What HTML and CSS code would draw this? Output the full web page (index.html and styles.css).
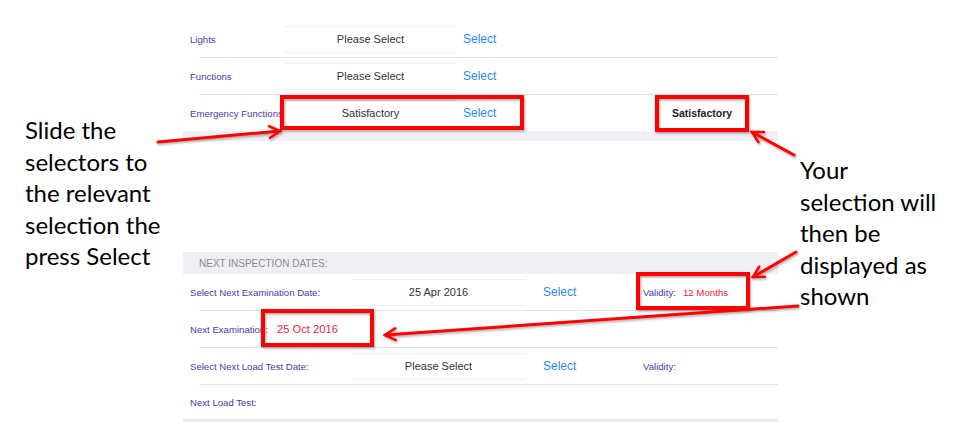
FILE: index.html
```html
<!DOCTYPE html>
<html lang="en">
<head>
<meta charset="utf-8">
<title>Inspection selectors</title>
<link rel="stylesheet" href="styles.css">
</head>
<body>
<div class="page">
  <div class="note note-left">Slide the<br>selectors to<br>the relevant<br>selection the<br>press Select</div>

  <div class="panel">
    <div class="group-top">
      <div class="row row-top sep">
        <span class="label">Lights</span>
        <div class="picker">Please Select</div>
        <span class="select">Select</span>
        <span class="result"></span>
      </div>
      <div class="row row-top sep">
        <span class="label">Functions</span>
        <div class="picker">Please Select</div>
        <span class="select">Select</span>
        <span class="result"></span>
      </div>
      <div class="row row-top last">
        <span class="label">Emergency Functions</span>
        <div class="picker">Satisfactory</div>
        <span class="select">Select</span>
        <span class="result">Satisfactory</span>
      </div>
    </div>
    <div class="band"></div>

    <div class="group-dates">
      <div class="header">NEXT INSPECTION DATES:</div>
      <div class="row row-date sep">
        <span class="label">Select Next Examination Date:</span>
        <div class="picker picker-date">25 Apr 2016</div>
        <span class="select">Select</span>
        <span class="validity">Validity:<span class="value">12 Months</span></span>
      </div>
      <div class="row row-next sep">
        <span class="label">Next Examination:</span>
        <span class="value value-big">25 Oct 2016</span>
      </div>
      <div class="row row-date sep">
        <span class="label">Select Next Load Test Date:</span>
        <div class="picker picker-date">Please Select</div>
        <span class="select">Select</span>
        <span class="validity">Validity:</span>
      </div>
      <div class="row row-next row-end">
        <span class="label">Next Load Test:</span>
      </div>
      <div class="band-thin"></div>
    </div>
  </div>

  <div class="note note-right">Your<br>selection will<br>then be<br>displayed as<br>shown</div>

  <svg class="overlay" width="968" height="432" viewBox="0 0 968 432" aria-hidden="true">
    <defs>
      <marker id="head" viewBox="0 0 12 12" refX="10.5" refY="6" markerWidth="14" markerHeight="14" markerUnits="userSpaceOnUse" orient="auto">
        <path d="M1.5,1 L10.5,6 L1.5,11" fill="none" stroke="#ff0000" stroke-width="2.2" stroke-linecap="round" stroke-linejoin="miter"/>
      </marker>
      <filter id="sh" x="-10%" y="-20%" width="130%" height="150%">
        <feDropShadow dx="1" dy="1.5" stdDeviation="1.2" flood-color="#000" flood-opacity="0.35"/>
      </filter>
    </defs>
    <g fill="none" stroke="#ff0000" stroke-width="4" filter="url(#sh)">
      <rect x="282" y="97" width="240" height="31"/>
      <rect x="657" y="97" width="90" height="33"/>
      <rect x="638" y="274" width="110" height="34"/>
      <rect x="263" y="311" width="109" height="34"/>
    </g>
    <g fill="none" stroke="#ff0000" stroke-width="3" stroke-linecap="round" marker-end="url(#head)" filter="url(#sh)">
      <line x1="158" y1="142" x2="280" y2="131"/>
      <line x1="794" y1="155" x2="752" y2="132"/>
      <line x1="796" y1="252" x2="753" y2="277"/>
      <line x1="798" y1="306" x2="385" y2="335"/>
    </g>
  </svg>
</div>
</body>
</html>
```

FILE: styles.css
```css
* { box-sizing: border-box; }

html, body {
  margin: 0;
  padding: 0;
  background: #ffffff;
}

body {
  width: 968px;
  height: 432px;
  overflow: hidden;
  font-family: "Liberation Sans", Arial, Helvetica, sans-serif;
}

.page {
  position: relative;
  width: 968px;
  height: 432px;
  display: grid;
  grid-template-columns: 183px 595px 1fr;
  align-items: start;
}

/* annotations */
.note {
  font-family: Lato, "Open Sans", sans-serif;
  font-size: 24px;
  line-height: 31.6px;
  color: #000;
  white-space: nowrap;
}
.note-left {
  padding: 114px 0 0 25px;
}
.note-right {
  padding: 154px 0 0 22px;
}

/* panel */
.panel {
  padding-top: 21px;
}

.row {
  display: grid;
  align-items: center;
  padding-left: 7px;
  padding-bottom: 1px;
  height: 37px;
}
.row.sep {
  background: linear-gradient(#e4e4e8, #e4e4e8) no-repeat 16px 100% / calc(100% - 16px) 1px;
}
.row.last { height: 36px; padding-bottom: 0; }

.row-top {
  grid-template-columns: 95px 171px 216px 1fr;
}
.row-top .select { padding-left: 7px; }

.label {
  font-size: 9.6px;
  color: #4a39a8;
  white-space: nowrap;
  overflow: hidden;
}

.picker {
  height: 27px;
  border-top: 1px solid #efeff1;
  border-bottom: 1px solid #efeff1;
  display: flex;
  align-items: center;
  justify-content: center;
  font-size: 11px;
  color: #333;
  padding-bottom: 1px;
}

.select {
  font-size: 12px;
  color: #2a8af6;
}

.result {
  font-size: 10.5px;
  font-weight: bold;
  color: #222;
}

.band {
  height: 10px;
  background: #efeff4;
}

.group-dates {
  margin-top: 111px;
}

.header {
  height: 22px;
  background: #efeff4;
  padding-left: 16px;
  display: flex;
  align-items: center;
  font-size: 10px;
  color: #8b8b90;
}

.row-date {
  grid-template-columns: 162px 173px 118px 1fr;
}
.row-date .select { padding-left: 18px; }

.validity {
  font-size: 9.6px;
  color: #4a39a8;
}

.value {
  color: #ee1c3a;
  font-size: 9.7px;
  margin-left: 7px;
}

.row-next {
  grid-template-columns: 87px 1fr;
}
.value-big {
  font-size: 11.2px;
  margin-left: 0;
}

.row-end {
  height: 34px;
  padding-bottom: 0;
}

.band-thin {
  height: 3px;
  background: #ebebf0;
}

.overlay {
  position: absolute;
  left: 0;
  top: 0;
  pointer-events: none;
}
```
